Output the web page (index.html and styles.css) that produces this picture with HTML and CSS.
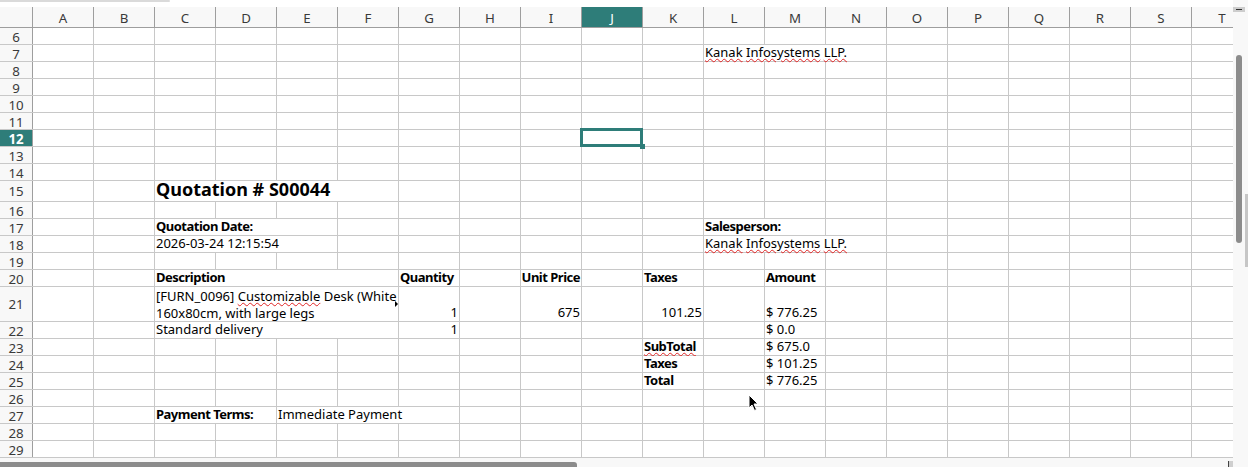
FILE: index.html
```html
<!DOCTYPE html>
<html lang="en">
<head>
    <meta charset="UTF-8">
    <meta name="viewport" content="width=device-width, initial-scale=1.0">
    <title>Quotation S00044</title>
    <link rel="stylesheet" href="styles.css">
</head>
<body>
    <div class="window">
        <div class="sheet">
            <div class="topbar"><span class="topbar-line"></span></div>

            <!-- Column headers -->
            <div class="colhead">
                <div class="corner"></div>
                <div class="ch">A</div>
                <div class="ch">B</div>
                <div class="ch">C</div>
                <div class="ch">D</div>
                <div class="ch">E</div>
                <div class="ch">F</div>
                <div class="ch">G</div>
                <div class="ch">H</div>
                <div class="ch">I</div>
                <div class="ch active">J</div>
                <div class="ch">K</div>
                <div class="ch">L</div>
                <div class="ch">M</div>
                <div class="ch">N</div>
                <div class="ch">O</div>
                <div class="ch">P</div>
                <div class="ch">Q</div>
                <div class="ch">R</div>
                <div class="ch">S</div>
                <div class="ch">T</div>
            </div>

            <!-- Rows -->
            <div class="row"><div class="rh">6</div></div>
            <div class="row">
                <div class="rh">7</div>
                <div class="c cL s3"><span class="typo">Kanak</span>&nbsp;<span class="typo">Infosystems</span>&nbsp;<span class="typo">LLP.</span></div>
            </div>
            <div class="row"><div class="rh">8</div></div>
            <div class="row"><div class="rh">9</div></div>
            <div class="row"><div class="rh">10</div></div>
            <div class="row"><div class="rh">11</div></div>
            <div class="row"><div class="rh active">12</div></div>
            <div class="row"><div class="rh">13</div></div>
            <div class="row"><div class="rh">14</div></div>
            <div class="row tall">
                <div class="rh">15</div>
                <div class="c cC s4 title">Quotation # S00044</div>
            </div>
            <div class="row"><div class="rh">16</div></div>
            <div class="row">
                <div class="rh">17</div>
                <div class="c cC s3 b">Quotation Date:</div>
                <div class="c cL s2 b">Salesperson:</div>
            </div>
            <div class="row">
                <div class="rh">18</div>
                <div class="c cC s3">2026-03-24 12:15:54</div>
                <div class="c cL s3"><span class="typo">Kanak</span>&nbsp;<span class="typo">Infosystems</span>&nbsp;<span class="typo">LLP.</span></div>
            </div>
            <div class="row"><div class="rh">19</div></div>
            <div class="row">
                <div class="rh">20</div>
                <div class="c cC s4 b">Description</div>
                <div class="c cG b">Quantity</div>
                <div class="c cI b r">Unit Price</div>
                <div class="c cK b">Taxes</div>
                <div class="c cM b">Amount</div>
            </div>
            <div class="row double">
                <div class="rh">21</div>
                <div class="c cC s4 wrap">
                    <div>[FURN_0096] <span class="typo">Customizable</span> Desk (White<br>160x80cm, with large legs</div>
                    <span class="clip-mark"></span>
                </div>
                <div class="c cG r">1</div>
                <div class="c cI r">675</div>
                <div class="c cK r">101.25</div>
                <div class="c cM">$ 776.25</div>
            </div>
            <div class="row">
                <div class="rh">22</div>
                <div class="c cC s4">Standard delivery</div>
                <div class="c cG r">1</div>
                <div class="c cM">$ 0.0</div>
            </div>
            <div class="row">
                <div class="rh">23</div>
                <div class="c cK b"><span class="typo">SubTotal</span></div>
                <div class="c cM">$ 675.0</div>
            </div>
            <div class="row">
                <div class="rh">24</div>
                <div class="c cK b">Taxes</div>
                <div class="c cM">$ 101.25</div>
            </div>
            <div class="row">
                <div class="rh">25</div>
                <div class="c cK b">Total</div>
                <div class="c cM">$ 776.25</div>
            </div>
            <div class="row"><div class="rh">26</div></div>
            <div class="row">
                <div class="rh">27</div>
                <div class="c cC s2 b">Payment Terms:</div>
                <div class="c cE s3">Immediate Payment</div>
            </div>
            <div class="row"><div class="rh">28</div></div>
            <div class="row"><div class="rh">29</div></div>

            <div class="hscroll">
                <div class="hthumb"></div>
                <div class="hbtn"></div>
            </div>
        </div>

        <div class="vscroll">
            <div class="vbtn"></div>
            <div class="vthumb"></div>
            <div class="vstrip"></div>
        </div>

        <!-- cell cursor on J12 and mouse pointer -->
        <div class="cell-cursor"><span class="fill-handle"></span></div>
        <svg class="pointer" width="12" height="18" viewBox="0 0 12 18">
            <path d="M1 1 V14 L4 11 L6.5 16.5 L8.5 15.5 L6 10 H10 Z" fill="#000" stroke="#fff" stroke-width="1" stroke-linejoin="round"/>
        </svg>
    </div>
</body>
</html>
```

FILE: styles.css
```css
body {
    margin: 0;
    font-family: "Noto Sans", "Open Sans", sans-serif;
    font-size: 13px;
    color: #000;
    background-color: #fff;
    overflow: hidden;
}

.window {
    position: relative;
    display: flex;
    width: 1248px;
    height: 467px;
}

.sheet {
    width: 1233px;
    height: 467px;
    overflow: hidden;
    display: flex;
    flex-direction: column;
}

.topbar {
    flex: none;
    height: 7px;
    background-color: #fff;
}

.topbar-line {
    display: block;
    width: 170px;
    height: 2px;
    background-color: #dadada;
    border-radius: 0 1px 1px 0;
}

/* Grid: row header + 20 columns */
.colhead,
.row {
    flex: none;
    display: grid;
    grid-template-columns: 33px repeat(20, 61px);
    grid-template-rows: minmax(0, 1fr);
    box-sizing: border-box;
}

.colhead {
    height: 21px;
    background-color: #f8f8f8;
    border-bottom: 1px solid #9e9e9e;
    font-size: 13.3px;
}

.corner,
.ch {
    box-sizing: border-box;
    border-right: 1px solid #9e9e9e;
}

.ch {
    display: flex;
    align-items: center;
    justify-content: center;
    color: #3a3a3a;
    padding-top: 1px;
}

.ch.active {
    background-color: #2e7d79;
    color: #fff;
}

.row {
    height: 17px;
    border-bottom: 1px solid #c8c8c8;
    background: linear-gradient(to right, transparent 60px, #c8c8c8 60px) 33px 0 / 61px 100% repeat-x, #fff;
}

.row.tall {
    height: 21px;
}

.row.double {
    height: 35px;
}

.rh {
    grid-column: 1;
    grid-row: 1;
    box-sizing: border-box;
    background-color: #f8f8f8;
    border-right: 1px solid #9e9e9e;
    display: flex;
    align-items: center;
    justify-content: center;
    color: #3a3a3a;
    font-size: 13.3px;
    line-height: 16px;
    padding-top: 1px;
}

.tall .rh,
.double .rh {
    padding-top: 0;
}

.rh.active {
    background-color: #2e7d79;
    color: #fff;
    font-weight: bold;
}

/* Cells */
.c {
    grid-row: 1;
    position: relative;
    box-sizing: border-box;
    min-height: 0;
    margin-right: 1px;
    padding: 0 1px;
    background-color: #fff;
    display: flex;
    align-items: flex-end;
    white-space: nowrap;
    line-height: 17px;
}

.b {
    font-weight: bold;
    letter-spacing: -0.5px;
}

.r {
    justify-content: flex-end;
}

.title {
    font-size: 18px;
    line-height: 20px;
    font-weight: bold;
    padding-bottom: 2px;
}

.wrap > div {
    margin-bottom: -1px;
}

.typo {
    text-decoration: underline wavy #e02424;
    text-decoration-thickness: 1px;
    text-underline-offset: 1px;
}

.clip-mark {
    position: absolute;
    right: 0;
    top: 14px;
    width: 0;
    height: 0;
    border-left: 3px solid #000;
    border-top: 3px solid transparent;
    border-bottom: 3px solid transparent;
}

.cC { grid-column-start: 4; }
.cE { grid-column-start: 6; }
.cG { grid-column-start: 8; }
.cI { grid-column-start: 10; }
.cK { grid-column-start: 12; }
.cL { grid-column-start: 13; }
.cM { grid-column-start: 14; }

.s2 { grid-column-end: span 2; }
.s3 { grid-column-end: span 3; }
.s4 { grid-column-end: span 4; }

/* Scrollbars */
.hscroll {
    flex: none;
    height: 9px;
    background-color: #f8f8f8;
    display: flex;
    align-items: flex-end;
    justify-content: space-between;
}

.hthumb {
    width: 577px;
    height: 5px;
    background-color: #8c8c8c;
    border-radius: 0 3px 0 0;
}

.hbtn {
    width: 4px;
    height: 6px;
    background-color: #cfcfcf;
    border-left: 1px solid #444;
}

.vscroll {
    width: 15px;
    height: 467px;
    background-color: #f8f8f8;
    display: flex;
    flex-direction: column;
}

.vbtn {
    position: relative;
    width: 12px;
    height: 5px;
    margin-top: 7px;
    background-color: #cdcdcd;
}

.vbtn::after {
    content: "";
    position: absolute;
    left: 3px;
    top: 2px;
    width: 6px;
    height: 1px;
    background-color: #333;
}

.vthumb {
    width: 6px;
    height: 188px;
    margin: 43px 0 0 3px;
    background-color: #8c8c8c;
    border-radius: 3px;
}

.vstrip {
    align-self: flex-end;
    width: 3px;
    height: 73px;
    margin-top: -49px;
    background-color: #c6c6c6;
}

/* Overlays */
.cell-cursor {
    position: absolute;
    left: 580px;
    top: 128px;
    width: 63px;
    height: 19px;
    box-sizing: border-box;
    border: 3px solid #2e7d79;
}

.fill-handle {
    position: absolute;
    right: -5px;
    bottom: -5px;
    width: 5px;
    height: 5px;
    background-color: #2e7d79;
}

.pointer {
    position: absolute;
    left: 748px;
    top: 394px;
}
```
